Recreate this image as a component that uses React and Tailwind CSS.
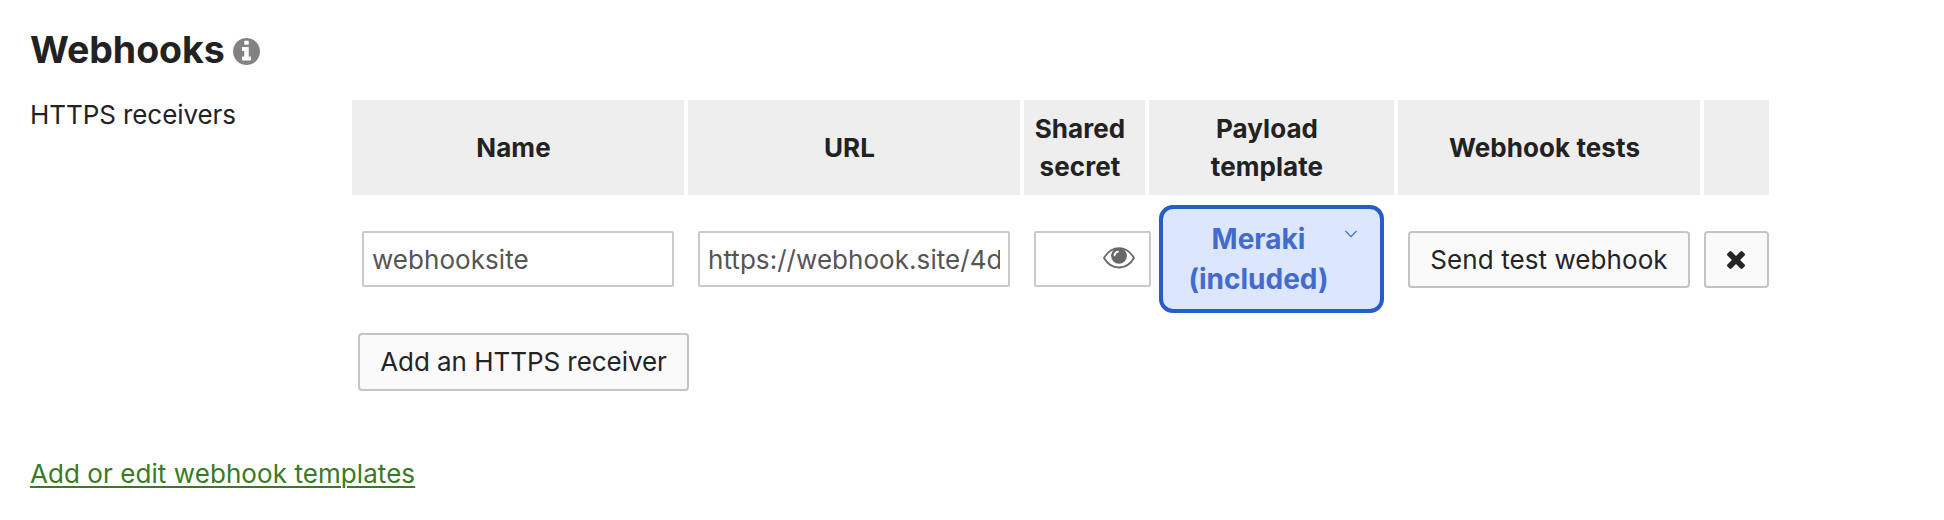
import React from "react";

function InfoIcon() {
  return (
    <svg className="mt-[10px] ml-[8px] size-[27px] shrink-0" viewBox="128 128 1536 1536" fill="#828284">
      <path d="M1152 1376v-160q0-14-9-23t-23-9h-96v-512q0-14-9-23t-23-9h-320q-14 0-23 9t-9 23v160q0 14 9 23t23 9h96v320h-96q-14 0-23 9t-9 23v160q0 14 9 23t23 9h448q14 0 23-9t9-23zm-128-896v-160q0-14-9-23t-23-9h-192q-14 0-23 9t-9 23v160q0 14 9 23t23 9h192q14 0 23-9t9-23zm640 416q0 209-103 385.5t-279.5 279.5-385.5 103-385.5-103-279.5-279.5-103-385.5 103-385.5 279.5-279.5 385.5-103 385.5 103 279.5 279.5 103 385.5z" />
    </svg>
  );
}

function CloseIcon() {
  return (
    <svg className="mr-[1px] size-[18px]" viewBox="302 366 1188 1188" fill="#222426">
      <path d="M1490 1322q0 40-28 68l-136 136q-28 28-68 28t-68-28l-294-294-294 294q-28 28-68 28t-68-28l-136-136q-28-28-28-68t28-68l294-294-294-294q-28-28-28-68t28-68l136-136q28-28 68-28t68 28l294 294 294-294q28-28 68-28t68 28l136 136q28 28 28 68t-28 68l-294 294 294 294q28 28 28 68z" />
    </svg>
  );
}

function EyeIcon() {
  return (
    <svg className="h-[22px] w-[32px]" viewBox="0 0 32 22" fill="none">
      <path d="M1 11C4.500 5 10 1.200 16 1.200S27.500 5 31 11C27.500 17 22 20.500 16 20.500S4.500 17 1 11Z" stroke="#68686a" strokeWidth="1.800" strokeLinejoin="round" />
      <circle cx="16" cy="8.800" r="7.900" fill="#68686a" />
      <path d="M11.500 8.500C11.700 6.300 13 5 15 4.700" stroke="#fff" strokeWidth="1.700" strokeLinecap="round" />
    </svg>
  );
}

const columns = [
  { label: "Name" },
  { label: "URL" },
  { label: "Shared secret" },
  { label: "Payload template" },
  { label: "Webhook tests" },
  { label: "" },
];

const inputClass =
  "block h-[56px] shrink-0 rounded-[2px] border-2 border-[#cacaca] bg-white px-[8px] text-[26px] tracking-[0.05px] text-[#555] outline-none";
const buttonClass =
  "flex items-center justify-center rounded-[4px] border-2 border-[#c4c4c4] bg-[#fafafa] text-[26px] whitespace-nowrap text-[#222426]";

export default function App() {
  return (
    <main className="h-[520px] w-[1944px] overflow-hidden bg-white pt-7 pl-[30px] font-['Inter',sans-serif] text-[26px] text-[#222]">
      <header className="flex h-[72px]">
        <h1 className="text-[37.5px] leading-[44px] font-[740] tracking-[-0.05px]">Webhooks</h1>
        <InfoIcon />
      </header>

      <section className="flex h-[344px]">
        <div className="w-[322px] shrink-0 leading-[30px] tracking-[-0.08px]">HTTPS receivers</div>
        <div>
          <div className="grid grid-cols-[332px_332px_121px_245px_302px_65px] gap-x-1">
            {columns.map((c, i) => (
              <div
                key={i}
                className="flex h-[95px] items-center justify-center bg-[#eee] pr-[19px] pl-[10px] text-center leading-[38px] font-[730] tracking-[0.08px]"
              >
                <span className={i === 3 ? "w-[130px]" : ""}>{c.label}</span>
              </div>
            ))}
            <div className="flex h-[128px] items-start px-[10px] pt-[36px]">
              <input className={`${inputClass} w-[312px]`} defaultValue="webhooksite" />
            </div>
            <div className="flex items-start px-[10px] pt-[36px]">
              <input className={`${inputClass} w-[312px]`} defaultValue="https://webhook.site/4d8a1c" />
            </div>
            <div className="flex items-start px-[10px] pt-[36px]">
              <div className={`${inputClass} w-[117px]`}>
                <div className="flex justify-end pt-[14px] pr-[6px]">
                  <EyeIcon />
                </div>
              </div>
            </div>
            <div className="px-[10px] pt-[10px]">
              <button className="flex h-[108px] w-[225px] items-start rounded-[14px] border-4 border-[#265dc8] bg-[#dce6fd] pt-[10px] pl-[22px] text-[28px] leading-[40px] font-[730] text-[#426bcd]">
                <span className="w-[147px] text-center">Meraki (included)</span>
                <svg className="mt-[11px] ml-[13px] h-2 w-3" viewBox="0 0 12 8" fill="none" stroke="#426bcd" strokeWidth="1.200">
                  <path d="M.5 1L6 6.700L11.500 1" />
                </svg>
              </button>
            </div>
            <div className="px-[10px] pt-[36px]">
              <button className={`${buttonClass} h-[57px] w-[282px] tracking-[0.07px]`}>Send test webhook</button>
            </div>
            <div className="pt-[36px]">
              <button className={`${buttonClass} h-[57px] w-[65px]`}>
                <CloseIcon />
              </button>
            </div>
          </div>
          <button className={`${buttonClass} mt-[10px] ml-[6px] h-[58px] w-[331px] pb-[2px] tracking-[-0.05px]`}>
            Add an HTTPS receiver
          </button>
        </div>
      </section>

      <a className="mt-[13px] inline-block leading-[34px] tracking-[0.07px] text-[#3a7a24] underline decoration-2 underline-offset-[3px]">
        Add or edit webhook templates
      </a>
    </main>
  );
}
